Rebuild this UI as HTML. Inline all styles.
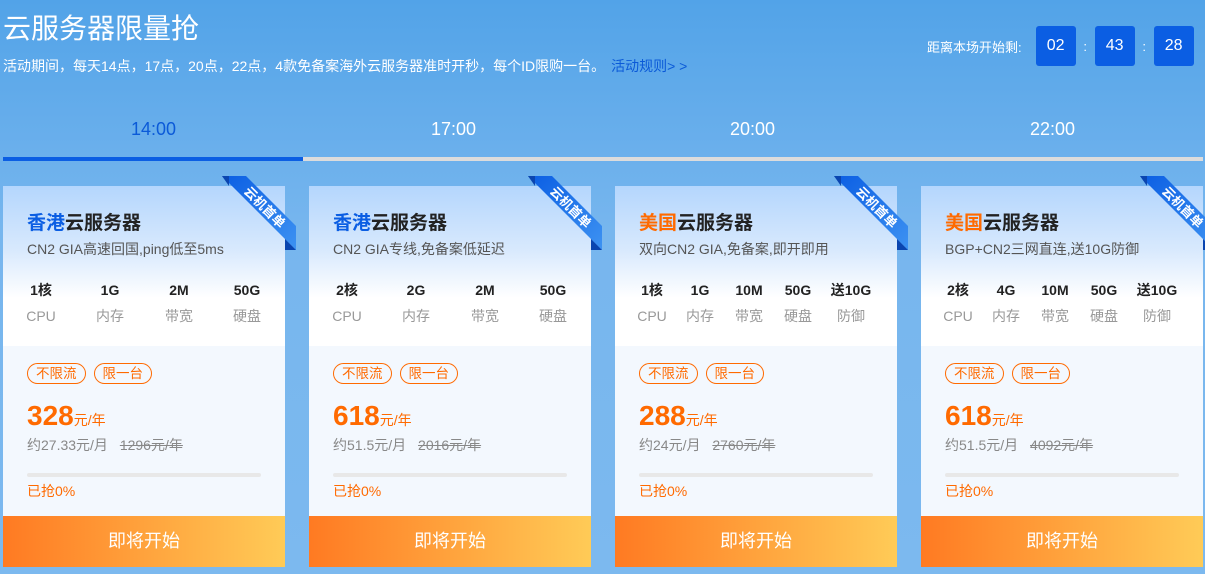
<!DOCTYPE html>
<html><head><meta charset="utf-8"><style>
*{margin:0;padding:0;box-sizing:border-box}
body{width:1205px;height:574px;overflow:hidden;background:linear-gradient(180deg,#52a3e8 0%,#77b6ee 40%,#7cb9ef 100%);font-family:"Liberation Sans","Noto Sans CJK SC",sans-serif;position:relative;color:#333}
.t{position:absolute;left:3px;top:12px;font-size:28px;color:#fff;line-height:34px}
.sub{position:absolute;left:3px;top:57px;font-size:14px;color:#fff;line-height:18px}
.sub a{color:#0b5ad8;margin-left:6px}
.cd{position:absolute;left:927px;top:26px;display:flex;align-items:center;color:#fff;font-size:13px}
.cd b{display:inline-block;width:40px;height:40px;background:#0b5ee3;border-radius:3px;font-weight:normal;font-size:16px;text-align:center;line-height:40px}
.cd b:first-of-type{margin-left:14px}
.cd i{font-style:normal;width:19px;text-align:center}
.tab{position:absolute;top:119px;font-size:18px;color:#fff;width:301px;text-align:center}
.line{position:absolute;left:3px;top:157px;width:1200px;height:4px;background:#dcdcdc}
.line div{width:300px;height:4px;background:#0b5ee3}
.card{position:absolute;top:186px;width:282px;height:381px;background:#f3f8fe}
.top{height:160px;background:linear-gradient(180deg,#b4d6fd 0%,#d8e9fd 40%,#fff 70%,#fff 100%);position:relative}
.name{position:absolute;left:24px;top:25px;font-size:19px;font-weight:bold;color:#222;line-height:26px}
.name span{color:#0b5ee3}.name span.o{color:#ff6a00}
.desc{position:absolute;left:24px;top:54px;font-size:14px;color:#555;line-height:18px}
.spec{position:absolute;top:95px;text-align:center;width:60px;margin-left:-30px}
.spec .v{font-size:14px;font-weight:bold;color:#222;line-height:18px;height:18px}
.spec .l{font-size:14px;color:#999;margin-top:8px;line-height:18px;height:18px}
.rib{position:absolute;left:0;top:-10px;width:300px;height:80px;overflow:visible}
.tags{position:absolute;left:24px;top:177px;display:flex;gap:8px}
.tags span{border:1px solid #ff6a00;color:#ff6a00;border-radius:11px;font-size:13.5px;padding:1px 8px;line-height:17px}
.price{position:absolute;left:24px;top:212px;color:#ff6a00;font-size:28px;font-weight:bold;line-height:36px}
.price small{font-size:14px;font-weight:normal}
.old{position:absolute;left:24px;top:250px;font-size:14px;color:#888;line-height:18px}
.old s{margin-left:8px}
.bar{position:absolute;left:24px;top:287px;width:234px;height:4px;background:#e8e8e8;border-radius:2px}
.got{position:absolute;left:24px;top:296px;font-size:14px;color:#ff6a00;line-height:18px}
.btn{position:absolute;left:0;bottom:0;width:282px;height:51px;background:linear-gradient(90deg,#ff7a22,#ffcb57);color:#fff;font-size:18px;text-align:center;line-height:51px}
</style></head><body>
<div class="t">云服务器限量抢</div>
<div class="sub">活动期间，每天14点，17点，20点，22点，4款免备案海外云服务器准时开秒，每个ID限购一台。<a>活动规则&gt; &gt;</a></div>
<div class="cd">距离本场开始剩:<b>02</b><i>:</i><b>43</b><i>:</i><b>28</b></div>
<div class="tab" style="left:3px;color:#0b5ad8">14:00</div>
<div class="tab" style="left:303px">17:00</div>
<div class="tab" style="left:602px">20:00</div>
<div class="tab" style="left:902px">22:00</div>
<div class="line"><div></div></div>

<svg width="0" height="0" style="position:absolute"><defs><linearGradient id="rg" x1="0" y1="0" x2="1" y2="1"><stop offset="0" stop-color="#0b5ee3"/><stop offset="1" stop-color="#3d92f2"/></linearGradient></defs></svg>

<div class="card" style="left:3px"><div class="top">
<div class="name"><span>香港</span>云服务器</div><div class="desc">CN2 GIA高速回国,ping低至5ms</div>
<div class="spec" style="left:38px"><div class="v">1核</div><div class="l">CPU</div></div>
<div class="spec" style="left:107px"><div class="v">1G</div><div class="l">内存</div></div>
<div class="spec" style="left:176px"><div class="v">2M</div><div class="l">带宽</div></div>
<div class="spec" style="left:244px"><div class="v">50G</div><div class="l">硬盘</div></div></div>
<svg class="rib"><polygon points="219,0 243,0 293,50 293,74" fill="url(#rg)"/><polygon points="219,0 226,0 226,10" fill="#0a45b0"/><polygon points="282,63 293,74 282,74" fill="#0a45b0"/><text x="262" y="36" transform="rotate(45 262 31)" fill="#fff" font-size="13" font-weight="bold" text-anchor="middle" font-family="Liberation Sans,Noto Sans CJK SC,sans-serif">云机首单</text></svg>
<div class="tags"><span>不限流</span><span>限一台</span></div>
<div class="price">328<small>元/年</small></div><div class="old">约27.33元/月 <s>1296元/年</s></div>
<div class="bar"></div><div class="got">已抢0%</div><div class="btn">即将开始</div></div>

<div class="card" style="left:309px"><div class="top">
<div class="name"><span>香港</span>云服务器</div><div class="desc">CN2 GIA专线,免备案低延迟</div>
<div class="spec" style="left:38px"><div class="v">2核</div><div class="l">CPU</div></div>
<div class="spec" style="left:107px"><div class="v">2G</div><div class="l">内存</div></div>
<div class="spec" style="left:176px"><div class="v">2M</div><div class="l">带宽</div></div>
<div class="spec" style="left:244px"><div class="v">50G</div><div class="l">硬盘</div></div></div>
<svg class="rib"><polygon points="219,0 243,0 293,50 293,74" fill="url(#rg)"/><polygon points="219,0 226,0 226,10" fill="#0a45b0"/><polygon points="282,63 293,74 282,74" fill="#0a45b0"/><text x="262" y="36" transform="rotate(45 262 31)" fill="#fff" font-size="13" font-weight="bold" text-anchor="middle" font-family="Liberation Sans,Noto Sans CJK SC,sans-serif">云机首单</text></svg>
<div class="tags"><span>不限流</span><span>限一台</span></div>
<div class="price">618<small>元/年</small></div><div class="old">约51.5元/月 <s>2016元/年</s></div>
<div class="bar"></div><div class="got">已抢0%</div><div class="btn">即将开始</div></div>

<div class="card" style="left:615px"><div class="top">
<div class="name"><span class="o">美国</span>云服务器</div><div class="desc">双向CN2 GIA,免备案,即开即用</div>
<div class="spec" style="left:37px"><div class="v">1核</div><div class="l">CPU</div></div>
<div class="spec" style="left:85px"><div class="v">1G</div><div class="l">内存</div></div>
<div class="spec" style="left:134px"><div class="v">10M</div><div class="l">带宽</div></div>
<div class="spec" style="left:183px"><div class="v">50G</div><div class="l">硬盘</div></div>
<div class="spec" style="left:236px"><div class="v">送10G</div><div class="l">防御</div></div></div>
<svg class="rib"><polygon points="219,0 243,0 293,50 293,74" fill="url(#rg)"/><polygon points="219,0 226,0 226,10" fill="#0a45b0"/><polygon points="282,63 293,74 282,74" fill="#0a45b0"/><text x="262" y="36" transform="rotate(45 262 31)" fill="#fff" font-size="13" font-weight="bold" text-anchor="middle" font-family="Liberation Sans,Noto Sans CJK SC,sans-serif">云机首单</text></svg>
<div class="tags"><span>不限流</span><span>限一台</span></div>
<div class="price">288<small>元/年</small></div><div class="old">约24元/月 <s>2760元/年</s></div>
<div class="bar"></div><div class="got">已抢0%</div><div class="btn">即将开始</div></div>

<div class="card" style="left:921px"><div class="top">
<div class="name"><span class="o">美国</span>云服务器</div><div class="desc">BGP+CN2三网直连,送10G防御</div>
<div class="spec" style="left:37px"><div class="v">2核</div><div class="l">CPU</div></div>
<div class="spec" style="left:85px"><div class="v">4G</div><div class="l">内存</div></div>
<div class="spec" style="left:134px"><div class="v">10M</div><div class="l">带宽</div></div>
<div class="spec" style="left:183px"><div class="v">50G</div><div class="l">硬盘</div></div>
<div class="spec" style="left:236px"><div class="v">送10G</div><div class="l">防御</div></div></div>
<svg class="rib"><polygon points="219,0 243,0 293,50 293,74" fill="url(#rg)"/><polygon points="219,0 226,0 226,10" fill="#0a45b0"/><polygon points="282,63 293,74 282,74" fill="#0a45b0"/><text x="262" y="36" transform="rotate(45 262 31)" fill="#fff" font-size="13" font-weight="bold" text-anchor="middle" font-family="Liberation Sans,Noto Sans CJK SC,sans-serif">云机首单</text></svg>
<div class="tags"><span>不限流</span><span>限一台</span></div>
<div class="price">618<small>元/年</small></div><div class="old">约51.5元/月 <s>4092元/年</s></div>
<div class="bar"></div><div class="got">已抢0%</div><div class="btn">即将开始</div></div>
</body></html>
